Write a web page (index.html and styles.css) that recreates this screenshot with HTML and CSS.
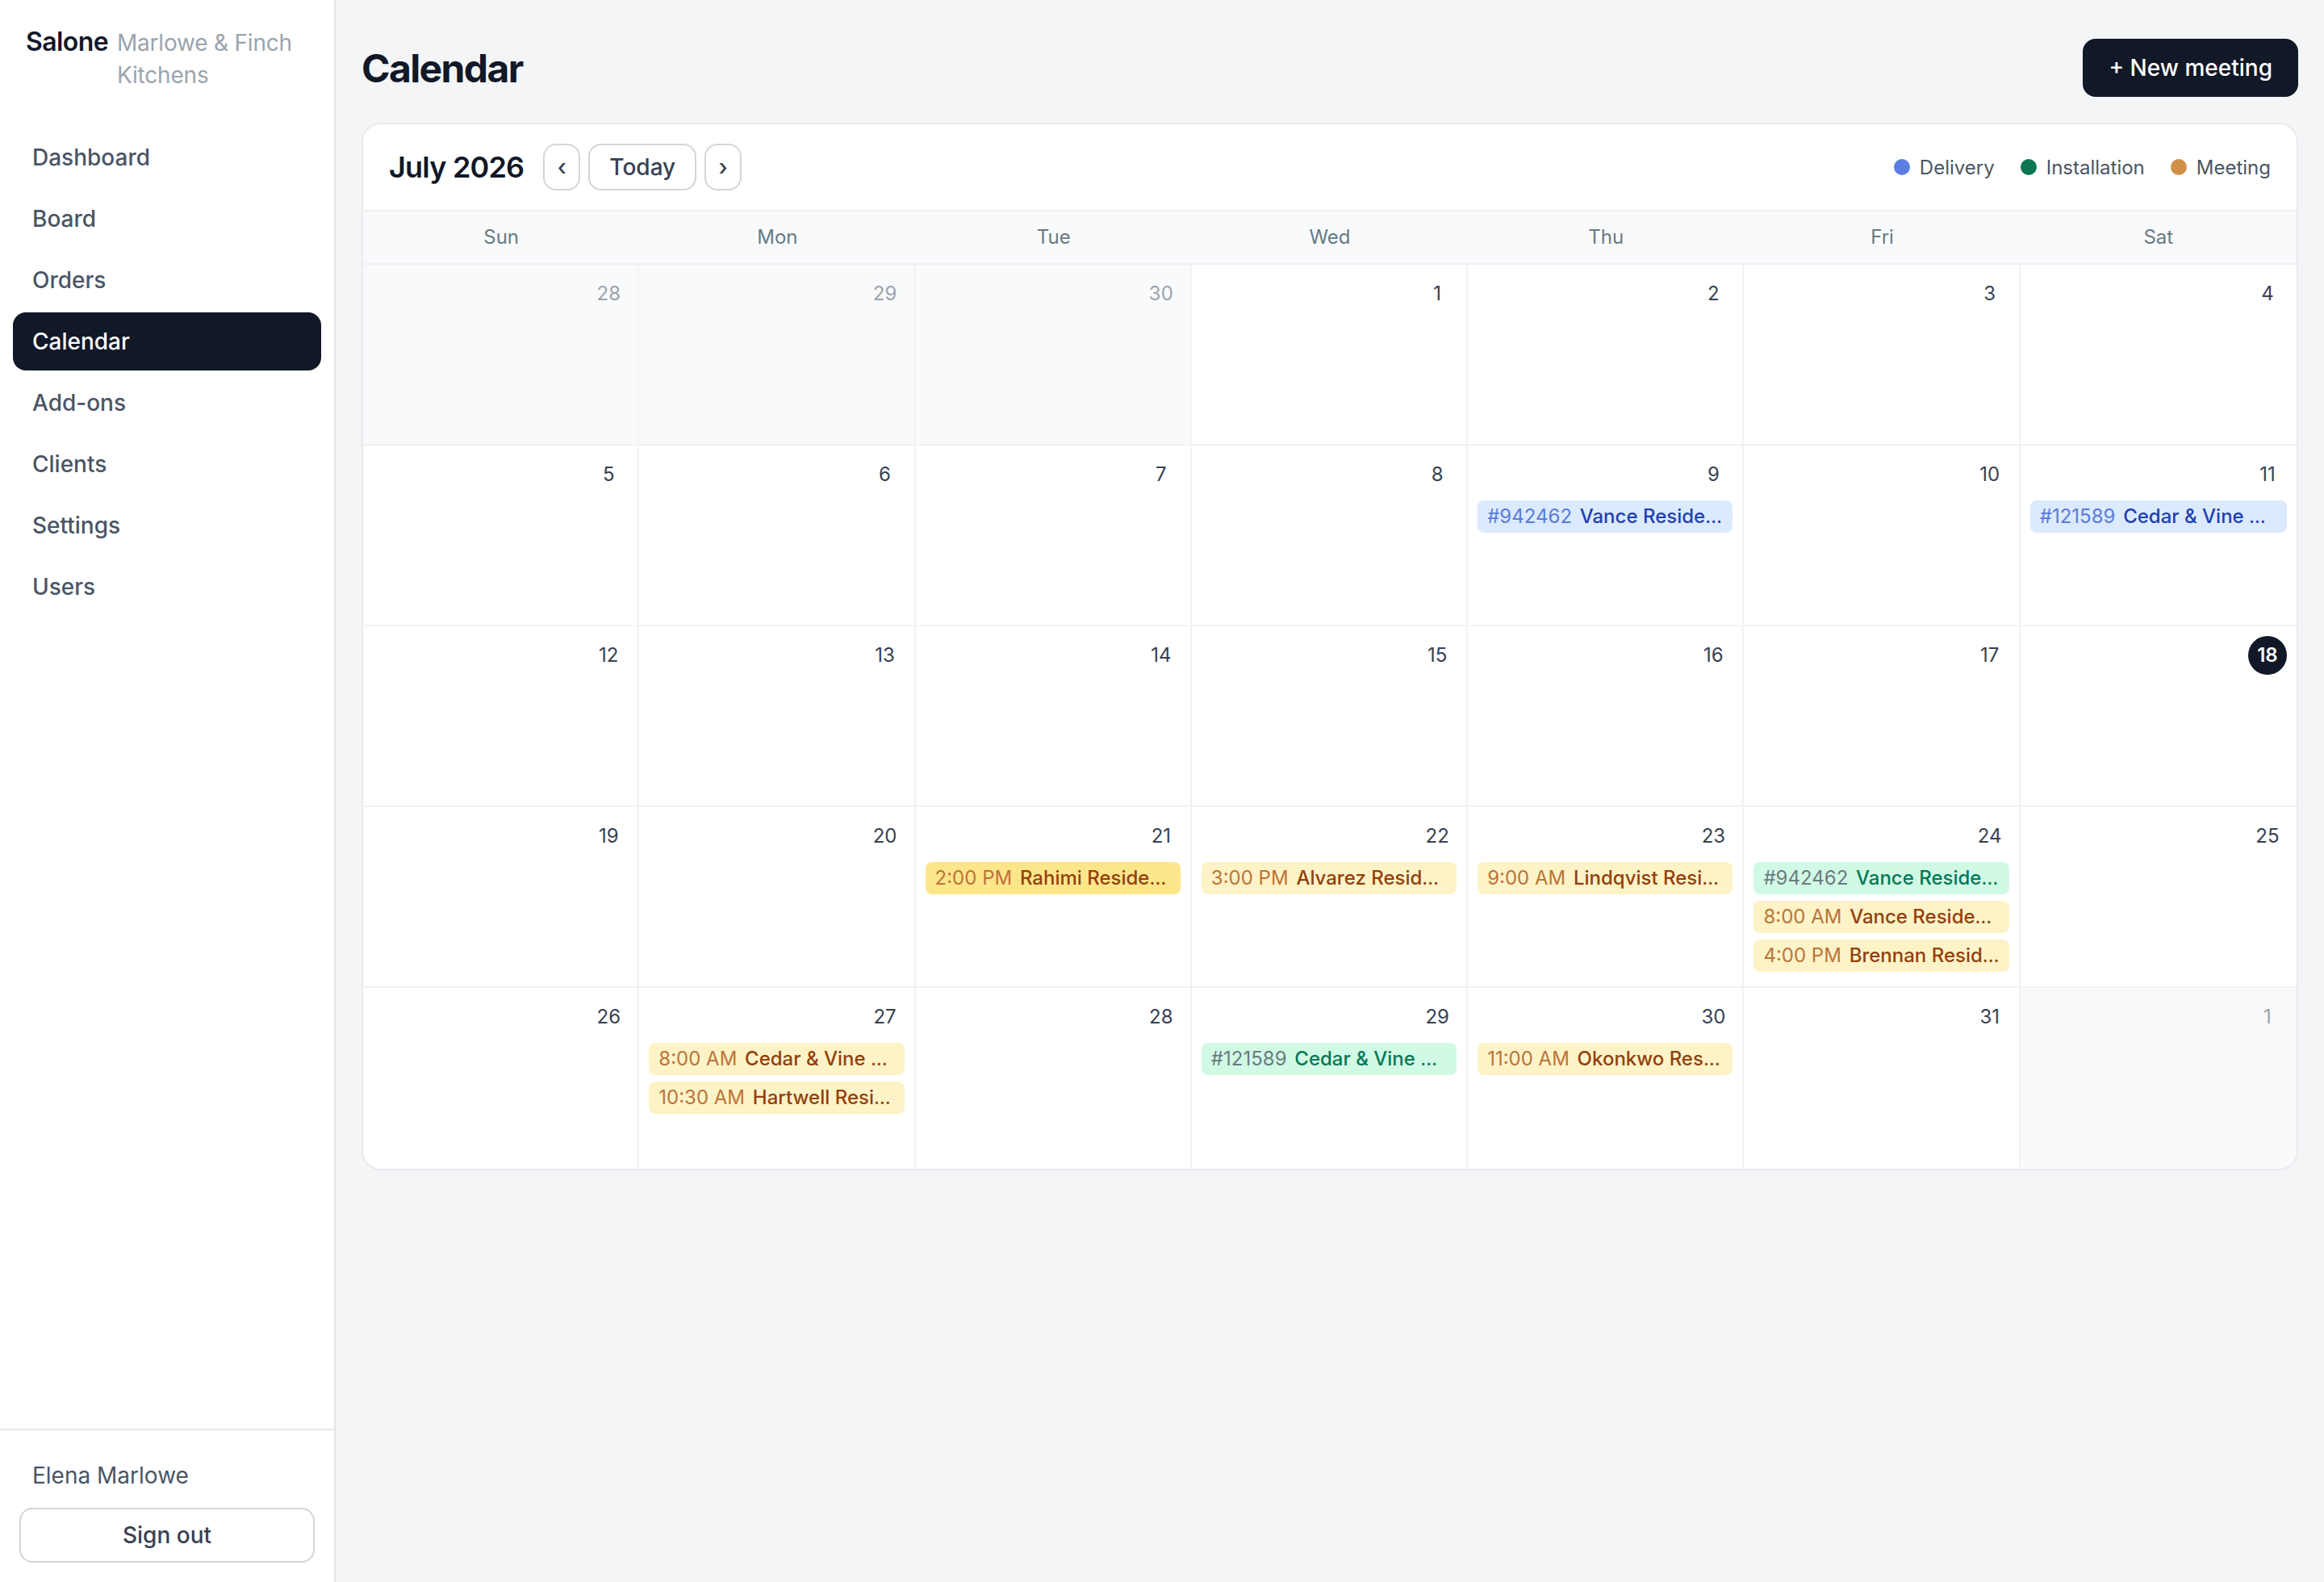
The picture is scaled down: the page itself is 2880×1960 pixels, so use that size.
FILE: index.html
```html
<!DOCTYPE html>
<html lang="en">
<head>
    <meta charset="UTF-8">
    <meta name="viewport" content="width=device-width, initial-scale=1.0">
    <title>Calendar - Salone</title>
    <link rel="stylesheet" href="styles.css">
</head>
<body>
    <div class="app">
        <aside class="sidebar">
            <div class="brand">
                <span class="brand-name">Salone</span>
                <span class="brand-org">Marlowe &amp; Finch Kitchens</span>
            </div>
            <nav class="nav">
                <a class="nav-item" href="#">Dashboard</a>
                <a class="nav-item" href="#">Board</a>
                <a class="nav-item" href="#">Orders</a>
                <a class="nav-item active" href="#">Calendar</a>
                <a class="nav-item" href="#">Add-ons</a>
                <a class="nav-item" href="#">Clients</a>
                <a class="nav-item" href="#">Settings</a>
                <a class="nav-item" href="#">Users</a>
            </nav>
            <div class="sidebar-footer">
                <div class="user-name">Elena Marlowe</div>
                <button class="btn-outline signout">Sign out</button>
            </div>
        </aside>

        <main class="main">
            <header class="page-header">
                <h1>Calendar</h1>
                <button class="btn-primary">+ New meeting</button>
            </header>

            <section class="calendar">
                <div class="cal-toolbar">
                    <div class="cal-nav">
                        <h2 class="cal-month">July 2026</h2>
                        <button class="btn-outline btn-icon">&lsaquo;</button>
                        <button class="btn-outline">Today</button>
                        <button class="btn-outline btn-icon">&rsaquo;</button>
                    </div>
                    <div class="legend">
                        <span class="legend-item"><i class="dot delivery"></i>Delivery</span>
                        <span class="legend-item"><i class="dot install"></i>Installation</span>
                        <span class="legend-item"><i class="dot meeting"></i>Meeting</span>
                    </div>
                </div>

                <div class="week">
                    <p>Sun</p>
                    <p>Mon</p>
                    <p>Tue</p>
                    <p>Wed</p>
                    <p>Thu</p>
                    <p>Fri</p>
                    <p>Sat</p>
                </div>

                <div class="days">
                    <!-- week 1 -->
                    <div class="day outside"><span class="num">28</span></div>
                    <div class="day outside"><span class="num">29</span></div>
                    <div class="day outside"><span class="num">30</span></div>
                    <div class="day"><span class="num">1</span></div>
                    <div class="day"><span class="num">2</span></div>
                    <div class="day"><span class="num">3</span></div>
                    <div class="day"><span class="num">4</span></div>

                    <!-- week 2 -->
                    <div class="day"><span class="num">5</span></div>
                    <div class="day"><span class="num">6</span></div>
                    <div class="day"><span class="num">7</span></div>
                    <div class="day"><span class="num">8</span></div>
                    <div class="day">
                        <span class="num">9</span>
                        <div class="events">
                            <div class="event delivery"><span class="pre">#942462</span> <span class="title">Vance Residence</span></div>
                        </div>
                    </div>
                    <div class="day"><span class="num">10</span></div>
                    <div class="day">
                        <span class="num">11</span>
                        <div class="events">
                            <div class="event delivery"><span class="pre">#121589</span> <span class="title">Cedar &amp; Vine Bistro</span></div>
                        </div>
                    </div>

                    <!-- week 3 -->
                    <div class="day"><span class="num">12</span></div>
                    <div class="day"><span class="num">13</span></div>
                    <div class="day"><span class="num">14</span></div>
                    <div class="day"><span class="num">15</span></div>
                    <div class="day"><span class="num">16</span></div>
                    <div class="day"><span class="num">17</span></div>
                    <div class="day"><span class="num today">18</span></div>

                    <!-- week 4 -->
                    <div class="day"><span class="num">19</span></div>
                    <div class="day"><span class="num">20</span></div>
                    <div class="day">
                        <span class="num">21</span>
                        <div class="events">
                            <div class="event meeting selected"><span class="pre">2:00 PM</span> <span class="title">Rahimi Residence</span></div>
                        </div>
                    </div>
                    <div class="day">
                        <span class="num">22</span>
                        <div class="events">
                            <div class="event meeting"><span class="pre">3:00 PM</span> <span class="title">Alvarez Residence</span></div>
                        </div>
                    </div>
                    <div class="day">
                        <span class="num">23</span>
                        <div class="events">
                            <div class="event meeting"><span class="pre">9:00 AM</span> <span class="title">Lindqvist Residence</span></div>
                        </div>
                    </div>
                    <div class="day">
                        <span class="num">24</span>
                        <div class="events">
                            <div class="event install"><span class="pre">#942462</span> <span class="title">Vance Residence</span></div>
                            <div class="event meeting"><span class="pre">8:00 AM</span> <span class="title">Vance Residence</span></div>
                            <div class="event meeting"><span class="pre">4:00 PM</span> <span class="title">Brennan Residence</span></div>
                        </div>
                    </div>
                    <div class="day"><span class="num">25</span></div>

                    <!-- week 5 -->
                    <div class="day"><span class="num">26</span></div>
                    <div class="day">
                        <span class="num">27</span>
                        <div class="events">
                            <div class="event meeting"><span class="pre">8:00 AM</span> <span class="title">Cedar &amp; Vine Bistro</span></div>
                            <div class="event meeting"><span class="pre">10:30 AM</span> <span class="title">Hartwell Residence</span></div>
                        </div>
                    </div>
                    <div class="day"><span class="num">28</span></div>
                    <div class="day">
                        <span class="num">29</span>
                        <div class="events">
                            <div class="event install"><span class="pre">#121589</span> <span class="title">Cedar &amp; Vine Bistro</span></div>
                        </div>
                    </div>
                    <div class="day">
                        <span class="num">30</span>
                        <div class="events">
                            <div class="event meeting"><span class="pre">11:00 AM</span> <span class="title">Okonkwo Residence</span></div>
                        </div>
                    </div>
                    <div class="day"><span class="num">31</span></div>
                    <div class="day outside"><span class="num">1</span></div>
                </div>
            </section>
        </main>
    </div>
</body>
</html>
```

FILE: styles.css
```css
*,*::before,*::after
{
    box-sizing: border-box;
}
body
{
    margin: 0;
    font-family: Inter, "Noto Sans", sans-serif;
    background-color: #f4f5f7;
    color: #111827;
}
button
{
    font-family: inherit;
    cursor: pointer;
}
.app
{
    display: flex;
    min-height: 100vh;
}

/* buttons */
.btn-outline
{
    height: 58px;
    padding: 0 24px;
    font-size: 28px;
    line-height: 40px;
    font-weight: 500;
    color: #374151;
    background-color: #fff;
    border: 2px solid #d1d5db;
    border-radius: 16px;
}
.btn-icon
{
    width: 46px;
    padding: 0;
}
.btn-primary
{
    height: 72px;
    padding: 0 32px;
    font-size: 28px;
    font-weight: 500;
    color: #fff;
    background-color: #111827;
    border: none;
    border-radius: 16px;
}

/* sidebar */
.sidebar
{
    display: flex;
    flex-direction: column;
    flex: 0 0 416px;
    height: 100vh;
    background-color: #fff;
    border-right: 2px solid #e5e7eb;
}
.brand
{
    display: flex;
    align-items: baseline;
    gap: 11px;
    padding: 32px 32px 0;
}
.brand-name
{
    font-size: 32px;
    font-weight: 600;
    letter-spacing: -0.6px;
    color: #111827;
}
.brand-org
{
    font-size: 28px;
    line-height: 40px;
    letter-spacing: -0.2px;
    color: #9aa4ad;
}
.nav
{
    display: flex;
    flex-direction: column;
    gap: 4px;
    flex: 1;
    margin-top: 46px;
    padding: 0 16px;
}
.nav-item
{
    display: block;
    padding: 16px 24px;
    font-size: 28px;
    line-height: 40px;
    font-weight: 500;
    color: #4a5565;
    text-decoration: none;
    border-radius: 16px;
}
.nav-item.active
{
    background-color: #111827;
    color: #fff;
}
.sidebar-footer
{
    padding: 24px;
    border-top: 2px solid #e5e7eb;
}
.user-name
{
    padding: 12px 16px;
    font-size: 28px;
    line-height: 40px;
    color: #4a5565;
}
.sidebar-footer .signout
{
    width: 100%;
    height: 68px;
    margin-top: 8px;
    padding: 12px 0;
}

/* main */
.main
{
    flex: 1;
    padding: 48px 32px;
}
.page-header
{
    display: flex;
    justify-content: space-between;
    align-items: center;
}
.page-header h1
{
    margin: 0;
    font-size: 48px;
    font-weight: 700;
    letter-spacing: -1.6px;
    color: #111827;
}
.calendar
{
    margin-top: 32px;
    background-color: #fff;
    border: 2px solid #e8eaed;
    border-radius: 24px;
    overflow: hidden;
}
.cal-toolbar
{
    display: flex;
    justify-content: space-between;
    align-items: center;
    padding: 24px 32px;
    border-bottom: 2px solid #eef0f3;
}
.cal-nav
{
    display: flex;
    align-items: center;
    gap: 10px;
}
.cal-month
{
    margin: 0 14px 0 0;
    font-size: 36px;
    font-weight: 600;
    letter-spacing: -0.8px;
    color: #111827;
}
.legend
{
    display: flex;
    align-items: center;
    gap: 32px;
}
.legend-item
{
    display: flex;
    align-items: center;
    font-size: 24px;
    color: #4b5563;
}
.dot
{
    width: 20px;
    height: 20px;
    margin-right: 12px;
    border-radius: 50%;
}
.dot.delivery
{
    background-color: #5b7fe1;
}
.dot.install
{
    background-color: #0b7650;
}
.dot.meeting
{
    background-color: #d18f48;
}

/* weekdays */
.week
{
    display: grid;
    grid-template-columns: repeat(7, 1fr);
    background-color: #f9fafb;
    border-bottom: 2px solid #eef0f3;
}
.week>p
{
    margin: 0;
    padding: 16px 0;
    font-size: 24px;
    line-height: 32px;
    text-align: center;
    color: #667a81;
}

/* month grid */
.days
{
    display: grid;
    grid-template-columns: repeat(7, 1fr);
    grid-auto-rows: 224px;
}
.day
{
    display: flex;
    flex-direction: column;
    min-width: 0;
    padding: 12px;
    border-right: 2px solid #f1f2f4;
    border-bottom: 2px solid #f1f2f4;
}
.day:nth-child(7n)
{
    border-right: none;
}
.day:nth-last-child(-n+7)
{
    border-bottom: none;
}
.day.outside
{
    background-color: #f9fafb;
}
.num
{
    align-self: flex-end;
    width: 48px;
    height: 48px;
    font-size: 24px;
    line-height: 48px;
    text-align: center;
    color: #374151;
}
.outside .num
{
    color: #9ca3af;
}
.num.today
{
    background-color: #111827;
    color: #fff;
    border-radius: 50%;
    font-weight: 600;
}
.events
{
    display: flex;
    flex-direction: column;
    gap: 8px;
    margin-top: 8px;
}
.event
{
    height: 40px;
    padding: 0 12px;
    font-size: 24px;
    line-height: 40px;
    border-radius: 8px;
    white-space: nowrap;
    overflow: hidden;
    text-overflow: ellipsis;
}
.event .pre
{
    margin-right: 3px;
}
.event .title
{
    font-weight: 500;
}
.event.delivery
{
    background-color: #dbeafe;
    color: #1e40af;
}
.event.delivery .pre
{
    color: #5a7bd6;
}
.event.install
{
    background-color: #d1fae5;
    color: #047857;
}
.event.install .pre
{
    color: #6b7a80;
}
.event.meeting
{
    background-color: #fef3c7;
    color: #92400e;
}
.event.meeting .pre
{
    color: #bb733a;
}
.event.meeting.selected
{
    background-color: #fde68a;
}
```
